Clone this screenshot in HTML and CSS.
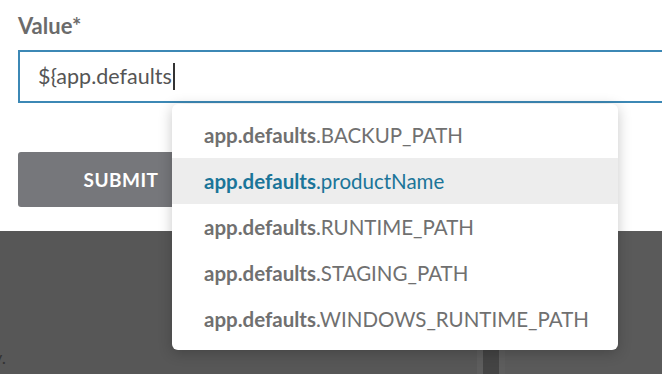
FILE: index.html
```html
<!DOCTYPE html>
<html lang="en">
<head>
    <meta charset="UTF-8">
    <meta name="viewport" content="width=device-width, initial-scale=1.0">
    <title>Value autocomplete</title>
    <link rel="stylesheet" href="styles.css">
</head>
<body>
    <div class="form">
        <label class="field-label" for="value">Value*</label>
        <div class="field">
            <div class="input" id="value">${app.defaults<span class="caret"></span></div>

            <ul class="suggest">
                <li><b>app.defaults</b>.BACKUP_PATH</li>
                <li class="active"><b>app.defaults</b>.productName</li>
                <li><b>app.defaults</b>.RUNTIME_PATH</li>
                <li><b>app.defaults</b>.STAGING_PATH</li>
                <li><b>app.defaults</b>.WINDOWS_RUNTIME_PATH</li>
            </ul>
        </div>
        <button class="submit">SUBMIT</button>
    </div>

    <div class="backdrop">
        <div class="backdrop-left">
            <p class="backdrop-text">y.</p>
        </div>
        <div class="backdrop-strip"></div>
        <div class="backdrop-right"></div>
    </div>
</body>
</html>
```

FILE: styles.css
```css
/* Page */
html, body {
    margin: 0;
    padding: 0;
    height: 100%;
    overflow: hidden;
}

body {
    font-family: Lato, "Open Sans", sans-serif;
    background-color: #fff;
    display: flex;
    flex-direction: column;
}

/* Form */
.form {
    padding: 14px 0 24px 18px;
}

.field-label {
    display: block;
    font-size: 22px;
    font-weight: bold;
    color: #6b6b6b;
    line-height: 24px;
}

.field {
    position: relative;
    margin-top: 12px;
}

.input {
    height: 49px;
    border: 2px solid #3c88b5;
    border-right: none;
    padding-left: 18px;
    font-size: 21.5px;
    line-height: 49px;
    color: #555;
}

.caret {
    display: inline-block;
    width: 2px;
    height: 27px;
    margin-left: 1px;
    vertical-align: -6px;
    background-color: #333;
}

/* Suggestions dropdown */
.suggest {
    position: absolute;
    z-index: 10;
    left: 154px;
    top: 54px;
    width: 446px;
    margin: 0;
    padding: 8px 0;
    list-style: none;
    background-color: #fff;
    border-radius: 6px;
    box-shadow: 0 3px 14px rgba(0, 0, 0, 0.22);
}

.suggest li {
    height: 46px;
    line-height: 46px;
    padding-left: 32px;
    font-size: 20.5px;
    color: #707070;
}

.suggest li b {
    font-weight: bold;
}

.suggest li.active {
    background-color: #ededed;
    color: #1b7599;
}

/* Submit */
.submit {
    display: block;
    margin-top: 49px;
    width: 206px;
    height: 55px;
    border: none;
    border-radius: 3px;
    background-color: #76777b;
    color: #fff;
    font-family: inherit;
    font-size: 19px;
    font-weight: bold;
    letter-spacing: 0.5px;
}

/* Dark area below */
.backdrop {
    flex: 1;
    display: flex;
    background-color: #575757;
}

.backdrop-left {
    width: 477px;
    position: relative;
}

.backdrop-text {
    position: absolute;
    left: -7px;
    bottom: 6px;
    margin: 0;
    font-size: 18px;
    color: #333;
}

.backdrop-strip {
    width: 16px;
    border-left: 6px solid #5d5d5d;
    border-right: 6px solid #5d5d5d;
    background-color: #444;
}

.backdrop-right {
    flex: 1;
    background-color: #5a5a5a;
}
```
